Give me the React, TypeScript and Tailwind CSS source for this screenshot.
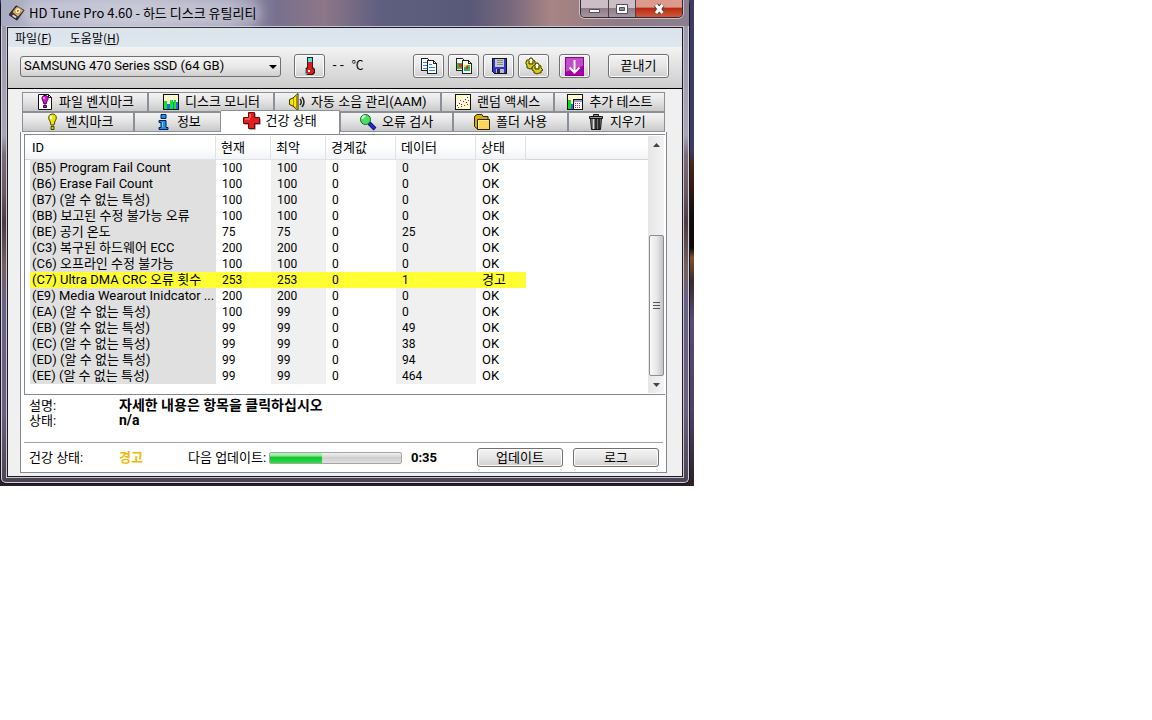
import type { ReactNode } from "react";

const thinBtn =
  "flex items-center justify-center rounded-[3px] border border-[#707070] bg-linear-to-b from-[#f4f4f4] via-[#e6e6e6] to-[#cfcfcf] shadow-[inset_0_0_0_1px_#fbfbfb]";

function Icon({ children, size = "h-[18px] w-[18px]" }: { children: ReactNode; size?: string }) {
  return (
    <svg viewBox="0 0 18 18" className={`${size} shrink-0`} aria-hidden="true">
      {children}
    </svg>
  );
}

const HddIcon = () => (
  <Icon size="h-4 w-4">
    <path d="M0 11 8 1l9 5-8 11z" fill="#3a3432" stroke="#15151c" />
    <path d="m4 8 5-6 7 4-6 7z" fill="#e8b56a" />
    <circle cx="10" cy="6.500" r="3.500" fill="#fbe7bc" stroke="#b98436" />
    <circle cx="10" cy="6.500" r="1" fill="#6b4b25" />
    <path d="m4 11.500 4 2.500" stroke="#d9d9d9" strokeWidth="2" />
  </Icon>
);

const ThermometerIcon = () => (
  <Icon>
    <path d="M6 0h6v10l2 2v4l-2 2H6l-2-2v-4l2-2z" fill="#222" />
    <path d="M7 1h4v4H7z" fill="#4fe3e3" />
    <path d="M7 5h4v6l2 2v2l-2 2H7l-2-2v-2l2-2z" fill="#e01818" />
    <path d="M7 13h2v2H7z" fill="#fff" />
    <path d="M4.500 11.500v5h2" fill="none" stroke="#5fb6b6" />
  </Icon>
);

const CopyIcon = () => (
  <Icon>
    <g shapeRendering="crispEdges">
      <path d="M1.500 1.500h6l2 2v10h-8z" fill="#fff" stroke="#222" />
      <path d="M3 5.500h4M3 8.500h5M3 11.500h5" stroke="#1c8cf0" />
      <path d="M7.500 3.500h6l3 3v10h-9z" fill="#fff" stroke="#222" />
      <path d="M13.500 3.500v3h3" fill="none" stroke="#222" />
      <path d="M9 7.500h3M9 10.500h6M9 13.500h6" stroke="#1c8cf0" />
    </g>
  </Icon>
);

const CopyImageIcon = () => (
  <Icon>
    <g shapeRendering="crispEdges">
      <path d="M1.500 1.500h6l2 2v10h-8z" fill="#fff" stroke="#222" />
      <path d="M2 6h6v6H2z" fill="#35b845" />
      <path d="M4 7h3v3H4z" fill="#e03010" />
      <path d="M7.500 3.500h6l3 3v10h-9z" fill="#fff" stroke="#222" />
      <path d="M13.500 3.500v3h3" fill="none" stroke="#222" />
      <path d="M9 8h6v6H9z" fill="#35b845" />
      <path d="M9 8h3v2H9z" fill="#e8e020" />
      <path d="M11 9h2v3h-2z" fill="#e03010" />
      <path d="M9 12h2v2H9z" fill="#1c9cf0" />
    </g>
  </Icon>
);

const SaveIcon = () => (
  <Icon>
    <g shapeRendering="crispEdges">
      <path d="M2.500 1.500h14v15h-12l-2-2z" fill="#3333d0" stroke="#111" />
      <path d="M5 2h9v8H5z" fill="#c8c8c8" />
      <path d="M7 3.500h6M7 5.500h6M7 7.500h6" stroke="#888" />
      <path d="M6 12h8v4H6z" fill="#bbb" />
      <path d="M7 12h3v4H7z" fill="#222266" />
    </g>
  </Icon>
);

const GearsIcon = () => (
  <Icon>
    <g fill="#d8ce18" stroke="#3c3800">
      <path d="m1 5 1-2h2l1-2h2l1 2 2 1v2l1 2-2 1v2H7l-2 1-2-1H2V8L1 7z" />
      <path d="m7 11 1-2 2-1 1-2h2l1 2 2 1v2l2 2-2 1v2h-2l-2 1-2-1H9v-2l-2-1z" />
    </g>
    <path d="M6 2v4M12 7v4" stroke="#fff" strokeWidth="2" />
    <path d="M4 4v3h4V4M10 9v3h4V9" fill="none" stroke="#3c3800" />
  </Icon>
);

const DownloadIcon = () => (
  <svg viewBox="0 0 19 19" className="h-[19px] w-[19px]" aria-hidden="true">
    <path d="M0 0h19v19H0z" fill="#8c0090" />
    <path d="M1 1h17v8L1 15z" fill="#c04cc6" />
    <path d="M1 15v3h17V9z" fill="#a800ac" />
    <path d="M9.500 3v12M4.500 10.500l5 5 5-5" fill="none" stroke="#fff" strokeWidth="2" />
  </svg>
);

const FileBenchIcon = () => (
  <Icon>
    <path d="M2.500 1.500h10l3 3v12h-13z" fill="#fff" stroke="#111" />
    <path d="M12.500 1.500v3h3" fill="none" stroke="#111" />
    <path d="M9 2.500c4 0 3.500 4 2 5.500l-1 3H8L7 8C5.500 6 5.500 2.500 9 2.500z" fill="#d414d4" stroke="#400040" />
    <path d="M7.500 12.500h3v2h-3z" fill="#d414d4" stroke="#400040" />
    <path d="M8 4v2" stroke="#fff" />
  </Icon>
);

const MonitorIcon = () => (
  <Icon>
    <g shapeRendering="crispEdges">
      <path d="M1.500 1.500h15v15h-15z" fill="#fffad0" stroke="#111" />
      <path d="M2 8h3v8H2zM8 7h3v9H8zM12 7h2v9h-2z" fill="#10e820" />
      <path d="M5 11h3v5H5zM11 9h1v7h-1zM14 9h2v7h-2z" fill="#2468f0" />
    </g>
  </Icon>
);

const SpeakerIcon = () => (
  <Icon>
    <path d="M1.500 6.500 5 5l5-4.500v17L5 13l-3.500-1.500z" fill="#ffe800" stroke="#332d00" />
    <path d="M5.500 5v8M8.500 3v12" stroke="#a88e00" />
    <path d="M12 6q2.500 3 0 6M14 4q4 5 0 10" fill="none" stroke="#222" strokeWidth="1.500" />
  </Icon>
);

const ScatterIcon = () => (
  <Icon>
    <g shapeRendering="crispEdges">
      <path d="M1.500 1.500h15v15h-15z" fill="#fffad0" stroke="#111" />
      <path d="M3 12h1v1H3zM5 10h1v1H5zM7 11h1v1H7zM9 8h1v1H9zM11 6h1v1h-1zM13 4h1v1h-1zM12 9h1v1h-1z" fill="#2020e0" />
      <path d="M4 14h1v1H4zM7 13h1v1H7zM10 12h1v1h-1zM13 11h1v1h-1zM6 7h1v1H6zM14 7h1v1h-1z" fill="#e02020" />
    </g>
  </Icon>
);

const ExtraIcon = () => (
  <Icon>
    <g shapeRendering="crispEdges">
      <path d="M1.500 1.500h15v15h-15z" fill="#fffad0" stroke="#111" />
      <path d="M2 7h3v9H2z" fill="#10d820" />
      <path d="M5 11h2v5H5z" fill="#2468f0" />
      <path d="M7.500 6.500h9v10h-9z" fill="#fff" stroke="#111" />
      <path d="M8 7h8v2H8z" fill="#7fa8f0" />
      <path d="M9 10.500h6M9 12.500h6M9 14.500h6" stroke="#e02060" strokeDasharray="1 1" />
    </g>
  </Icon>
);

const BulbIcon = () => (
  <Icon>
    <path d="M9.500 1C14 1 14 6 12 8l-1 4H8L7 8C5 6 5 1 9.500 1z" fill="#f2e600" stroke="#4a4500" />
    <path d="M8 13.500h3v3H8z" fill="#d8ca00" stroke="#4a4500" />
    <path d="M8 3v3" stroke="#fff" strokeWidth="2" />
  </Icon>
);

const InfoIcon = () => (
  <Icon>
    <path d="M7 1.500h5v4H7z" fill="#1e90f0" stroke="#00204a" />
    <path d="M5 7.500h7v7h2v2H5v-2h2v-5H5z" fill="#1e90f0" stroke="#00204a" />
    <path d="M8.500 9v5" stroke="#7cc6ff" />
  </Icon>
);

const CrossIcon = () => (
  <Icon>
    <path d="M6.500 1.500h6v5h5v6h-5v5h-6v-5h-5v-6h5z" fill="#555" />
    <path d="M5.500.5h6v5h5v6h-5v5h-6v-5h-5v-6h5z" fill="#e02020" stroke="#6c0808" />
    <path d="M7 6V2M2 7h5" stroke="#ff8a8a" />
  </Icon>
);

const SearchIcon = () => (
  <Icon>
    <path d="m10 10 6 6" stroke="#101060" strokeWidth="4" />
    <path d="m10 10 6 6" stroke="#2030d8" strokeWidth="2" />
    <circle cx="6.500" cy="6.500" r="5" fill="#48e060" stroke="#15602a" />
    <path d="M3.500 6q0-3 3-3" fill="none" stroke="#d8ffd8" strokeWidth="2" />
  </Icon>
);

const FolderIcon = () => (
  <Icon>
    <path d="M1.500 3.500 4 1.500h5l1 2h5v3h1.500v10H5l-3.500-3z" fill="#d8b000" stroke="#2c2400" />
    <path d="M4.500 6.500h12v10h-12z" fill="#ffd858" stroke="#2c2400" />
    <path d="M5.500 15.500v-8h10" fill="none" stroke="#fff29a" />
  </Icon>
);

const TrashIcon = () => (
  <Icon>
    <path d="M3.500 5.500h11l-1 11h-9z" fill="#777" stroke="#111" />
    <path d="M2.500 3.500h13v2h-13zM6.500 1.500h5v2h-5z" fill="#999" stroke="#111" />
    <path d="M6.500 6v10" stroke="#ddd" />
    <path d="M9 6v10M12 6v10" stroke="#2a2a2a" strokeWidth="2" />
  </Icon>
);

const attributes: [string, string, string, string, string, string][] = [
  ["(B5) Program Fail Count", "100", "100", "0", "0", "OK"],
  ["(B6) Erase Fail Count", "100", "100", "0", "0", "OK"],
  ["(B7) (알 수 없는 특성)", "100", "100", "0", "0", "OK"],
  ["(BB) 보고된 수정 불가능 오류", "100", "100", "0", "0", "OK"],
  ["(BE) 공기 온도", "75", "75", "0", "25", "OK"],
  ["(C3) 복구된 하드웨어 ECC", "200", "200", "0", "0", "OK"],
  ["(C6) 오프라인 수정 불가능", "100", "100", "0", "0", "OK"],
  ["(C7) Ultra DMA CRC 오류 횟수", "253", "253", "0", "1", "경고"],
  ["(E9) Media Wearout Inidcator ...", "200", "200", "0", "0", "OK"],
  ["(EA) (알 수 없는 특성)", "100", "99", "0", "0", "OK"],
  ["(EB) (알 수 없는 특성)", "99", "99", "0", "49", "OK"],
  ["(EC) (알 수 없는 특성)", "99", "99", "0", "38", "OK"],
  ["(ED) (알 수 없는 특성)", "99", "99", "0", "94", "OK"],
  ["(EE) (알 수 없는 특성)", "99", "99", "0", "464", "OK"],
];

const columns = ["ID", "현재", "최악", "경계값", "데이터", "상태"];
const shades = ["bg-[#e0e0e0]", "", "bg-[#f0f0f0]", "", "bg-[#f0f0f0]", ""];

function Tab({ icon, label, grow, active }: { icon: ReactNode; label: string; grow: string; active?: boolean }) {
  return (
    <button
      type="button"
      role="tab"
      aria-selected={!!active}
      className={`flex min-w-0 items-center justify-center gap-[5px] whitespace-nowrap border-t border-r border-[#8a8f98] text-[13px] leading-4 ${grow} ${
        active ? "h-6 bg-white pb-[3px]" : "h-5 border-l border-b bg-linear-to-b from-[#f4f4f4] via-[#e2e2e2] to-[#c9c9c9]"
      }`}
    >
      {icon}
      <span>{label}</span>
    </button>
  );
}

function CaptionButtons() {
  return (
    <div className="flex h-[18px] shrink-0 overflow-hidden rounded-b-[5px] border border-t-0 border-[#2f2a33] shadow-[0_0_0_1px_#ffffff80]">
      <button type="button" aria-label="최소화" className="flex w-7 items-center justify-center border-r border-[#4a414b] bg-linear-to-b from-[#cbbfc5] from-45% via-[#8d7c87] via-50% to-[#a8969f]">
        <svg viewBox="0 0 13 12" className="h-3 w-[13px]"><path d="M1.500 6.500h10v3h-10z" fill="#fff" stroke="#4b5060" /></svg>
      </button>
      <button type="button" aria-label="최대화" className="flex w-[27px] items-center justify-center border-r border-[#4a414b] bg-linear-to-b from-[#cbbfc5] from-45% via-[#8d7c87] via-50% to-[#a8969f]">
        <svg viewBox="0 0 13 12" className="h-3 w-[13px]">
          <path d="M.5 1.500h11v9H.5z" fill="#fff" stroke="#4b5060" />
          <path d="M3.500 4.500h5v3h-5z" fill="#9a8c95" stroke="#4b5060" />
        </svg>
      </button>
      <button type="button" aria-label="닫기" className="flex w-[46px] items-center justify-center bg-linear-to-b from-[#dc9a8c] from-40% via-[#b82a10] via-50% to-[#d0583a]">
        <svg viewBox="0 0 13 12" className="h-3 w-[13px]">
          <path d="m3 2 6.500 8M9.500 2 3 10" stroke="#4b3c48" strokeWidth="5" />
          <path d="m3 2 6.500 8M9.500 2 3 10" stroke="#fff" strokeWidth="3" />
        </svg>
      </button>
    </div>
  );
}

function Scrollbar() {
  return (
    <div className="mr-px flex w-4 shrink-0 flex-col items-center bg-linear-to-r from-[#e6e6e6] to-[#f3f3f3]">
      <button type="button" aria-label="위로" className="flex h-[18px] w-full items-center justify-center">
        <svg viewBox="0 0 7 4" className="h-1 w-[7px]"><path d="M0 4 3.500 0 7 4z" fill="#444" /></svg>
      </button>
      <div className="flex-1" />
      <div className="flex h-[141px] w-[15px] flex-col items-center justify-center gap-[2px] rounded-[2px] border border-[#8d8d8d] bg-linear-to-r from-[#f8f8f8] via-[#e8e8ea] to-[#c3c4c9]">
        <div className="h-px w-[7px] bg-[#555]" />
        <div className="h-px w-[7px] bg-[#555]" />
        <div className="h-px w-[7px] bg-[#555]" />
      </div>
      <button type="button" aria-label="아래로" className="flex h-[17px] w-full items-center justify-center">
        <svg viewBox="0 0 7 4" className="h-1 w-[7px]"><path d="M0 0h7L3.500 4z" fill="#444" /></svg>
      </button>
    </div>
  );
}

export default function App() {
  return (
    <div className="min-h-screen bg-white font-['Roboto','Noto_Sans_CJK_KR',sans-serif] text-[13px] leading-4 text-black">
      <div className="w-[694px] max-w-full bg-[linear-gradient(to_bottom,#3d3a66_0%,#3d3a66_31%,#4a2418_34%,#120a0c_45%,#0d0808_51%,#80502c_53%,#3a2a30_58%,#5a4a78_66%,#4a4068_85%,#2a2028_100%)] pr-1 pb-[2px]">
        <div className="rounded-t-[5px] rounded-b-[6px] border border-t-0 border-[#15131b] bg-[linear-gradient(to_bottom,#9a98ae_0%,#a9a6b8_28%,#7c6c7c_32%,#6c5660_40%,#4a3c42_46%,#76605a_55%,#6a6284_62%,#6a6080_85%,#4c4450_100%)]">
          <div className="rounded-b-[5px] border border-t-0 border-[#d5d2dc] px-1 pb-1">
            <header className="-mx-[5px] flex h-[26px] items-start justify-between bg-[linear-gradient(to_right,#a9abc2_0%,#b6b7ca_20%,#a3a3ba_33%,#77708f_40%,#8d7688_47%,#5f5f80_55%,#585878_68%,#77687c_74%,#a88484_80%,#8e7a86_90%,#8a7f8f_100%)] pr-[6px] pl-2">
              <div className="flex h-[26px] items-center gap-1 font-['Noto_Sans_CJK_KR',sans-serif] text-[13px]">
                <HddIcon />
                <h1 className="rounded-full bg-white/25 shadow-[0_0_8px_6px_#ffffff40]">HD Tune Pro 4.60 - 하드 디스크 유틸리티</h1>
              </div>
              <CaptionButtons />
            </header>

            <main className="border border-[#c9c6d2]">
              <div className="border border-[#1b1b22] bg-[#f0f0f0]">
                <nav className="flex h-[19px] items-center gap-[18px] bg-linear-to-b from-[#dbe3ec] to-[#dee6ee] pl-[7px] font-['Noto_Sans_CJK_KR',sans-serif] text-[12px]">
                  <button type="button">파일(<u>F</u>)</button>
                  <button type="button">도움말(<u>H</u>)</button>
                </nav>

                <div className="flex items-center border-b border-black bg-linear-to-b from-[#f3f3f3] to-[#cdcdcd] pt-[7px] pr-[13px] pb-[10px] pl-3">
                  <div className="relative w-[261px]">
                    <select
                      aria-label="드라이브"
                      className="block h-[21px] w-full appearance-none rounded-[3px] border border-[#707070] bg-linear-to-b from-[#f4f4f4] via-[#e9e9e9] to-[#d0d0d0] pl-[3px] text-[13px]"
                    >
                      <option>SAMSUNG 470 Series SSD (64 GB)</option>
                    </select>
                    <svg viewBox="0 0 8 4" className="pointer-events-none absolute top-[9px] right-1 h-1 w-2"><path d="M0 0h8L4 4z" /></svg>
                  </div>
                  <button type="button" aria-label="온도" className={`${thinBtn} ml-[13px] h-6 w-[31px]`}><ThermometerIcon /></button>
                  <span className="ml-[6px] flex gap-[6px] text-[12px]"><span className="font-['Liberation_Mono',monospace]">--</span><span>℃</span></span>
                  <div className="ml-auto flex gap-1">
                    <button type="button" aria-label="텍스트 복사" className={`${thinBtn} h-6 w-[31px]`}><CopyIcon /></button>
                    <button type="button" aria-label="화면 복사" className={`${thinBtn} h-6 w-[31px]`}><CopyImageIcon /></button>
                    <button type="button" aria-label="저장" className={`${thinBtn} h-6 w-[31px]`}><SaveIcon /></button>
                    <button type="button" aria-label="설정" className={`${thinBtn} h-6 w-[31px]`}><GearsIcon /></button>
                  </div>
                  <button type="button" aria-label="내려받기" className={`${thinBtn} ml-[10px] h-6 w-[31px]`}><DownloadIcon /></button>
                  <button type="button" className={`${thinBtn} ml-[18px] h-6 w-[61px]`}>끝내기</button>
                </div>

                <div className="pt-[3px] pr-[15px] pb-[3px] pl-3">
                  <div role="tablist" className="pr-[2px] pl-[2px]">
                    <div className="flex">
                      <Tab icon={<FileBenchIcon />} label="파일 벤치마크" grow="flex-[126]" />
                      <Tab icon={<MonitorIcon />} label="디스크 모니터" grow="flex-[126]" />
                      <Tab icon={<SpeakerIcon />} label="자동 소음 관리(AAM)" grow="flex-[167]" />
                      <Tab icon={<ScatterIcon />} label="랜덤 액세스" grow="flex-[113]" />
                      <Tab icon={<ExtraIcon />} label="추가 테스트" grow="flex-[111]" />
                    </div>
                    <div className="relative flex h-5 items-center">
                      <Tab icon={<BulbIcon />} label="벤치마크" grow="flex-[112]" />
                      <Tab icon={<InfoIcon />} label="정보" grow="flex-[86]" />
                      <Tab icon={<CrossIcon />} label="건강 상태" grow="flex-[120]" active />
                      <Tab icon={<SearchIcon />} label="오류 검사" grow="flex-[113]" />
                      <Tab icon={<FolderIcon />} label="폴더 사용" grow="flex-[115]" />
                      <Tab icon={<TrashIcon />} label="지우기" grow="flex-[97]" />
                    </div>
                  </div>

                  <section className="border border-t-0 border-[#828790] bg-white pt-[2px] pr-px pl-[3px]">
                    <div className="flex border-t border-b border-l border-[#828790] py-px">
                      <div className="min-w-0 flex-1 pb-[9px]">
                        <table className="w-full table-fixed border-separate border-spacing-0 text-left">
                          <colgroup>
                            <col className="w-[5px]" />
                            <col className="w-[186px]" />
                            <col className="w-[55px]" />
                            <col className="w-[55px]" />
                            <col className="w-[70px]" />
                            <col className="w-[80px]" />
                            <col className="w-[50px]" />
                            <col />
                          </colgroup>
                          <thead>
                            <tr className="h-6 bg-linear-to-b from-white from-40% to-[#f1f3f5]">
                              <td className="border-b border-[#d5d5d5] p-0" />
                              {columns.map((c) => (
                                <th key={c} scope="col" className={`border-r border-b border-[#dfe1e4] p-0 font-normal ${c === "ID" ? "pl-[2px]" : "pl-[5px]"}`}>{c}</th>
                              ))}
                              <td className="border-b border-[#d5d5d5] p-0" />
                            </tr>
                          </thead>
                          <tbody>
                            {attributes.map((row) => {
                              const warn = row[5] === "경고";
                              return (
                                <tr key={row[0]} className="h-4">
                                  <td className="p-0" />
                                  {row.map((cell, i) => (
                                    <td
                                      key={i}
                                      className={`h-4 overflow-hidden whitespace-nowrap p-0 leading-4 ${i === 0 ? "pl-[2px]" : "pl-[6px]"} ${
                                        /^[0-9]/.test(cell) ? "text-[12px]" : ""
                                      } ${warn ? "bg-[#ffff33]" : shades[i]}`}
                                    >
                                      {cell}
                                    </td>
                                  ))}
                                  <td className="p-0" />
                                </tr>
                              );
                            })}
                          </tbody>
                        </table>
                      </div>
                      <Scrollbar />
                    </div>

                    <dl className="mr-[2px] grid grid-cols-[90px_1fr] border-b border-[#a0a0a0] pt-[3px] pb-[14px] pl-[5px] leading-[15px]">
                      <dt>설명:</dt>
                      <dd className="text-[14px] leading-[15px] font-bold">자세한 내용은 항목을 클릭하십시오</dd>
                      <dt>상태:</dt>
                      <dd className="text-[14px] leading-[15px] font-bold">n/a</dd>
                    </dl>

                    <div className="flex h-[29px] items-center pr-[6px] pl-[5px]">
                      <span className="w-[90px]">건강 상태:</span>
                      <strong className="w-[69px] text-[#f0b800]">경고</strong>
                      <span className="w-[81px] whitespace-nowrap">다음 업데이트:</span>
                      <div role="progressbar" aria-label="다음 업데이트" aria-valuenow={40} className="h-3 w-[133px] overflow-hidden rounded-[2px] border border-[#a5a5a5] bg-linear-to-b from-[#f2f2f2] via-[#cfcfcf] to-[#e0e0e0]">
                        <div className="h-full w-2/5 bg-linear-to-b from-[#a8f0b4] from-20% via-[#10c42c] via-45% to-[#2cdc48]" />
                      </div>
                      <strong className="ml-[9px]">0:35</strong>
                      <div className="ml-auto flex gap-[10px]">
                        <button type="button" className={`${thinBtn} h-[19px] w-[86px]`}>업데이트</button>
                        <button type="button" className={`${thinBtn} h-[19px] w-[86px]`}>로그</button>
                      </div>
                    </div>
                  </section>
                </div>
              </div>
            </main>
          </div>
        </div>
      </div>
    </div>
  );
}
